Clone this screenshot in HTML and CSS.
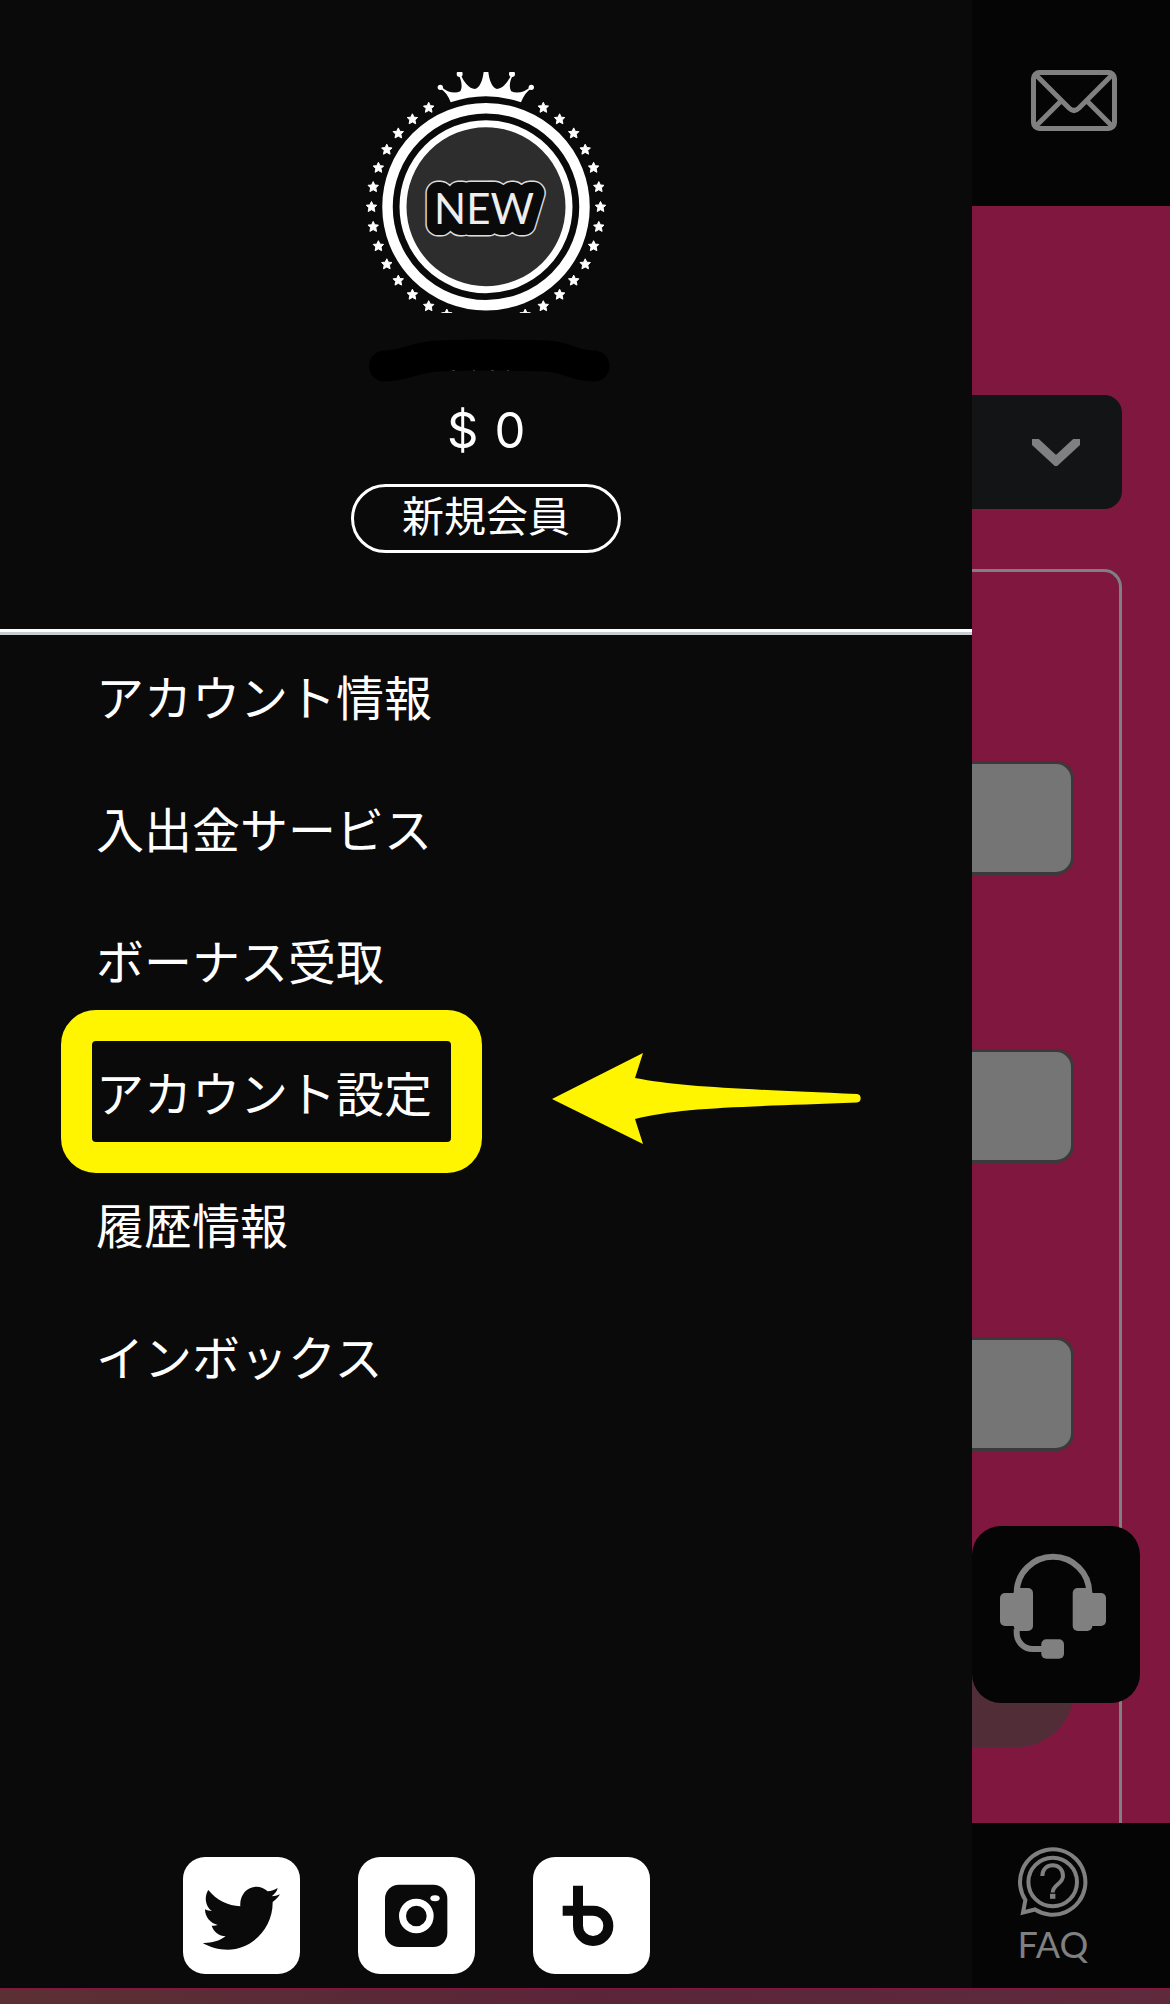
FILE: index.html
```html
<!DOCTYPE html>
<html lang="ja">
<head>
<meta charset="utf-8">
<meta name="viewport" content="width=device-width, initial-scale=1">
<title>アカウント設定</title>
<link rel="stylesheet" href="styles.css">
</head>
<body>
<div class="app">
  <div class="page">
    <header class="page-header">
      <button class="icon-button" type="button" aria-label="メール">
        <svg width="86" height="61" viewBox="0 0 86 61" fill="none" stroke="#808080" stroke-width="5">
          <rect x="2.5" y="2.5" width="81" height="56" rx="6"/>
          <path d="M5 5 L38 38 Q43 43 48 38 L81 5 M30 31 L5 56 M56 31 L81 56"/>
        </svg>
      </button>
    </header>
    <main class="content">
      <button class="dropdown" type="button" aria-label="メニューを選択">
        <svg width="48" height="27" viewBox="0 0 48 27" fill="none" stroke="#808080" stroke-width="9"><path d="M-2 -2 L24 22 L50 -2"/></svg>
      </button>
      <form class="card">
        <input class="field" type="password" aria-label="現在のパスワード">
        <input class="field" type="password" aria-label="新しいパスワード">
        <input class="field" type="password" aria-label="パスワードの確認">
        <button class="submit" type="button" aria-label="送信"></button>
      </form>
    </main>
    <nav class="tabbar">
      <a class="tab" href="#">
        <svg width="70" height="70" viewBox="0 0 70 70" fill="none" stroke="#808080" stroke-width="4">
          <path d="M7.4 53 A32.7 32.7 0 1 1 17 62.5 L5 65.5 Z"/>
          <circle cx="34.7" cy="35" r="24.3"/>
          <path d="M24.3 29 C24.3 14.5 45 14.5 45 29 C45 37 34.7 37.5 34.7 45.5"/>
          <path d="M32 49.3 h5.4" stroke-width="5"/>
        </svg>
        <span>FAQ</span>
      </a>
    </nav>
    <button class="support" type="button" aria-label="サポート">
      <svg width="106" height="106" viewBox="0 0 106 106" fill="#808080">
        <path d="M16.7 40 A36.3 36.3 0 0 1 89.3 40 M16.7 76 V80 A16 16 0 0 0 32.7 96 H44" fill="none" stroke="#808080" stroke-width="6"/>
        <rect x="0" y="40" width="24" height="33" rx="5"/>
        <rect x="13.7" y="35" width="19.3" height="43" rx="5"/>
        <rect x="72.7" y="35" width="19.6" height="43" rx="5"/>
        <rect x="82" y="40" width="24" height="33" rx="5"/>
        <rect x="41.3" y="86.3" width="22.7" height="19.4" rx="5"/>
      </svg>
    </button>
  </div>

  <aside class="drawer">
    <section class="profile">
      <svg class="badge" width="240" height="241" viewBox="0 0 240 241">
        <defs>
          <path id="star" fill="#fff" stroke="#fff" stroke-width="1" stroke-linejoin="round" d="M0 -5.2 L1.6 -1.8 L5.2 -1.5 L2.6 1.1 L3.3 4.8 L0 3 L-3.3 4.8 L-2.6 1.1 L-5.2 -1.5 L-1.6 -1.8 Z"/>
          <g id="stars">
            <use href="#star" x="62.7" y="35.5"/>
            <use href="#star" x="46.4" y="47"/>
            <use href="#star" x="32.3" y="61.1"/>
            <use href="#star" x="20.8" y="77.4"/>
            <use href="#star" x="12.4" y="95.5"/>
            <use href="#star" x="7.2" y="114.8"/>
            <use href="#star" x="5.5" y="134.7"/>
            <use href="#star" x="7.2" y="154.6"/>
            <use href="#star" x="12.4" y="173.9"/>
            <use href="#star" x="20.8" y="192"/>
            <use href="#star" x="32.3" y="208.3"/>
            <use href="#star" x="46.4" y="222.4"/>
            <use href="#star" x="62.7" y="233.9"/>
            <use href="#star" x="80.8" y="242.3"/>
          </g>
        </defs>
        <use href="#stars"/>
        <use href="#stars" transform="translate(240 0) scale(-1 1)"/>
        <g transform="scale(.3333) translate(-78 -66)" fill="#fff">
          <path d="M332 157 C326 138 315 124 299 114 L303 110 C322 127 345 132 361 124 C369 108 363 90 357 76 L362 74 C373 97 386 115 405 117 C420 114 428 90 431 66 L445 66 C448 90 456 114 471 117 C490 115 503 97 514 74 L519 76 C511 90 505 108 514 124 C530 132 554 127 572 110 L576 114 C560 124 550 138 543 157 Q438 121 332 157 Z"/>
          <circle cx="301" cy="112" r="8"/><circle cx="359" cy="72" r="9"/>
          <circle cx="516" cy="72" r="9"/><circle cx="574" cy="112" r="8"/>
        </g>
        <circle cx="120" cy="134.7" r="98.5" fill="none" stroke="#fff" stroke-width="10.5"/>
        <circle cx="120" cy="134.7" r="83" fill="#2d2d2d" stroke="#fff" stroke-width="7"/>
        <g stroke-linejoin="round" class="badge-text">
          <text x="118" y="152" text-anchor="middle" class="badge-edge">NEW</text>
          <text x="118" y="152" text-anchor="middle" class="badge-face" aria-hidden="true">NEW</text>
        </g>
      </svg>
      <svg class="redaction" width="247" height="43" viewBox="-6 0 247 43">
        <path d="M15.5 27 C38 27 46 17 72 17 C110 15 140 16 178 17 C198 18 204 27 225 27" fill="none" stroke="#000" stroke-width="31" stroke-linecap="round"/>
        <path d="M83 31.500 h3 M104 31.500 h2 M122 31.500 h3 M138 31.500 h2" stroke="#333"/>
      </svg>
      <p class="balance"><span>$</span><span>0</span></p>
      <span class="rank">新規会員</span>
    </section>
    <ul class="menu">
      <li><a href="#">アカウント情報</a></li>
      <li><a href="#">入出金サービス</a></li>
      <li><a href="#">ボーナス受取</a></li>
      <li>
        <a class="highlighted" href="#">アカウント設定
          <svg class="arrow" width="309" height="92" viewBox="0 0 309 92" fill="#fff500"><path d="M0 46 L91 0 L83 25 C130 34 190 36 305 41 A4.300 4.300 0 0 1 305 49.500 C190 54 130 54 83 66 L91 91 Z"/></svg>
        </a>
      </li>
      <li><a href="#">履歴情報</a></li>
      <li><a href="#">インボックス</a></li>
    </ul>
    <div class="social">
      <a href="#" aria-label="Twitter">
        <svg viewBox="70 79 351 351" fill="#0a0a0a"><path d="M146 178 C170 208 205 225 242 227 C239 193 262 168 290 168 C303 168 315 173 324 182 C335 181 345 177 354 172 C352 182 345 190 336 197 C345 197 353 194 361 191 C355 201 348 208 339 214 C340 290 280 357 204 357 C177 357 151 350 129 337 C153 338 178 332 198 317 C178 316 162 304 156 285 C162 286 169 285 174 283 C153 278 136 260 136 236 C142 239 150 241 157 241 C138 227 132 200 146 178Z"/></svg>
      </a>
      <a href="#" aria-label="Instagram">
        <svg viewBox="592 79 351 351" fill="#0a0a0a"><rect x="673" y="162" width="187" height="187" rx="42"/><circle cx="767" cy="256" r="41.500" fill="none" stroke="#fff" stroke-width="21"/><ellipse cx="823" cy="203" rx="14" ry="9" fill="#fff"/></svg>
      </a>
      <a href="#" aria-label="ブログ">
        <svg viewBox="1122 79 351 351" fill="none" stroke="#0a0a0a" stroke-width="30"><path d="M1257 165 V285 A45.500 45.500 0 1 0 1302 240 H1211"/></svg>
      </a>
    </div>
  </aside>
</div>
<div class="page-end"></div>
</body>
</html>
```
FILE: styles.css
```css
* { box-sizing: border-box; }

body {
  margin: 0;
  min-height: 100vh;
  display: flex;
  flex-direction: column;
  background: #7f173f;
  color: #fff;
  font-family: Lato, "Noto Sans CJK JP", sans-serif;
}

button { padding: 0; border: 0; background: none; }
a { color: inherit; text-decoration: none; }
svg { display: block; }

/* The page and the open drawer share one grid cell */
.app { display: grid; flex: 1; }
.page, .drawer { grid-area: 1 / 1; }

.page {
  position: relative;
  display: flex;
  flex-direction: column;
  min-width: 0;
}

.page-header {
  display: flex;
  justify-content: flex-end;
  align-items: center;
  height: 206px;
  padding: 0 53px 5px;
  background: #050505;
}

.content {
  flex: 1;
  display: flex;
  flex-direction: column;
  gap: 60px;
  padding: 189px 48px 0;
}

.dropdown {
  display: flex;
  justify-content: flex-end;
  align-items: center;
  height: 114px;
  padding: 0 42px;
  border-radius: 18px;
  background: #131416;
}

.card {
  flex: 1;
  display: flex;
  flex-direction: column;
  gap: 174px;
  padding: 189px 45px 75px;
  border: 3px solid #808080;
  border-bottom: 0;
  border-radius: 18px 18px 0 0;
}

.field {
  width: 100%;
  height: 114px;
  border: 3px solid #3a3a3a;
  border-radius: 18px;
  background: #757575;
}

.submit {
  height: 114px;
  margin-top: 8px;
  border-radius: 57px;
  background: #512d38;
}

.tabbar {
  display: grid;
  grid-template-columns: repeat(5, 1fr);
  height: 165px;
  background: #050505;
}

.tab {
  grid-column: 5;
  display: flex;
  flex-direction: column;
  align-items: center;
  gap: 3px;
  padding-top: 24px;
  color: #808080;
  font-size: 36px;
  line-height: 48px;
}

.support {
  position: absolute;
  right: 30px;
  bottom: 285px;
  display: flex;
  justify-content: center;
  width: 168px;
  height: 177px;
  padding: 27px 6px 0 0;
  border-radius: 29px;
  background: #050505;
}

.drawer {
  z-index: 1;
  display: flex;
  flex-direction: column;
  width: 83.1%;
  background: #0a0a0a;
}

.profile {
  display: flex;
  flex-direction: column;
  align-items: center;
  padding: 72px 0 76px;
  border-bottom: 3px solid #fff;
}

.badge-text { font: 42px Lato, sans-serif; fill: #eee; }
.badge-edge {
  stroke: #ddd;
  stroke-width: 25px;
}
.badge-face {
  stroke: #0a0a0a;
  stroke-width: 22px;
  paint-order: stroke;
}

.redaction { margin-top: 26px; }

.balance {
  display: flex;
  gap: 16px;
  margin: 19px 0 23px;
  font: 49px/60px Inter, sans-serif;
}

.rank {
  width: 270px;
  padding-bottom: 9px;
  border: 3px solid #fff;
  border-radius: 35px;
  font-size: 42px;
  line-height: 54px;
  text-align: center;
}

.rank, .menu { font-family: "Noto Sans CJK JP", sans-serif; }

.menu {
  flex: 1;
  margin: 0;
  padding: 0 96px;
  border-top: 3px solid #c8cdd1;
  list-style: none;
  font-size: 48px;
  line-height: 120px;
}

.menu li { height: 132px; }
.menu a { display: inline-block; }

.highlighted { position: relative; }
.highlighted::before {
  content: "";
  position: absolute;
  inset: -21px -50px -22px -35px;
  border: 31px solid #fff500;
  border-radius: 35px;
}
.arrow {
  position: absolute;
  top: 22px;
  left: calc(100% + 120px);
}

.social {
  display: flex;
  gap: 58px;
  padding: 0 183px 14px;
}
.social a {
  width: 117px;
  height: 117px;
  border-radius: 22px;
  background: #fff;
}

.page-end {
  height: 16px;
  border-top: 1px solid #7f173f;
  background: linear-gradient(90deg, #5b3034, #5a2539 50%, #5e2a3c);
}
```
